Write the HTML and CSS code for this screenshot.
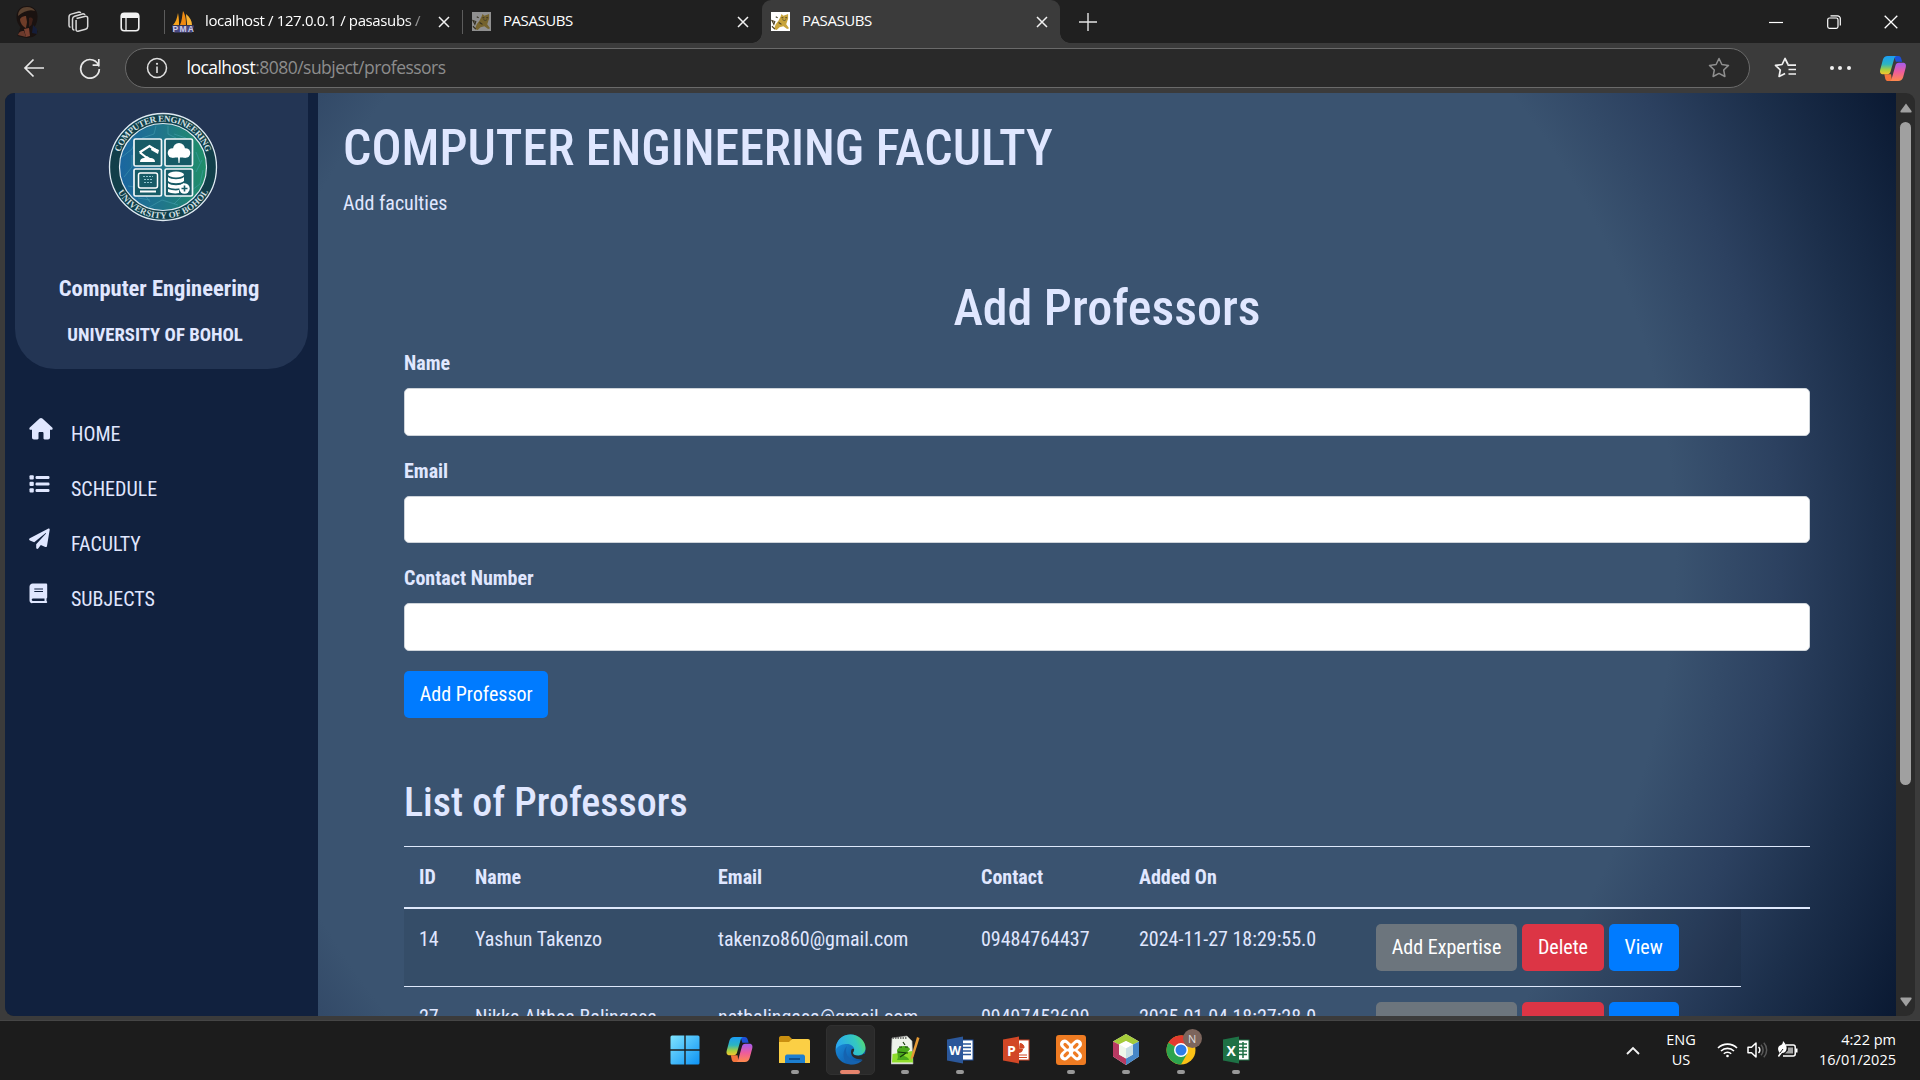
FILE: index.html
```html
<!DOCTYPE html>
<html lang="en">
<head>
<meta charset="utf-8">
<title>PASASUBS</title>
<link rel="stylesheet" href="styles.css">
</head>
<body>
<svg class="defs" width="0" height="0" aria-hidden="true">
  <defs>
    <linearGradient id="cp1" x1="0" y1="0" x2="0" y2="1"><stop offset="0" stop-color="#1b9df5"/><stop offset=".45" stop-color="#2cb5c0"/><stop offset=".75" stop-color="#a8cf3e"/><stop offset="1" stop-color="#f8c52e"/></linearGradient>
    <linearGradient id="cp2" x1="0" y1="0" x2="0" y2="1"><stop offset="0" stop-color="#a45cf0"/><stop offset=".5" stop-color="#ee5c9c"/><stop offset="1" stop-color="#ff8a4c"/></linearGradient>
    <symbol id="copilot" viewBox="0 0 28 28">
      <path d="M15 1h4.500c1.700 0 2.600 1 3 2.500L23.500 7H17z" fill="#1c50d8"/>
      <path d="M13 27H9c-1.700 0-2.600-1-3-2.500L5 20h7z" fill="#f4743c"/>
      <path d="M8.500 1H18c-1.500 0-2.300 1.300-2.700 2.700l-3.700 13C11 19 10 20 8 20H4c-3 0-4-2-3.200-5L3.500 5C4.200 2.500 5.800 1 8.500 1z" fill="url(#cp1)"/>
      <path d="M19.500 27H10c1.500 0 2.300-1.300 2.700-2.700l3.700-13C17 9 18 8 20 8h4c3 0 4 2 3.200 5l-2.700 10c-.7 2.500-2.300 4-5 4z" fill="url(#cp2)"/>
    </symbol>
    <symbol id="x" viewBox="0 0 12 12"><path d="M1 1l10 10M11 1L1 11" fill="none" stroke="#f2f2f2" stroke-width="1.500"/></symbol>
    <symbol id="tomcat" viewBox="0 0 20 20">
      <rect width="20" height="20" fill="#fff"/>
      <path d="M3 18l2-5 3-4 2-4 1-3 2 2 3-1 2-1v5l-1 3-1 3 3 4-2 1-4-3-4 1-3 3z" fill="#c9a53c"/>
      <path d="M1 9l3 1-1 3zM11 6h2M15 6h2M8 11l3 2M1 15l3 3M5 5l2 1" stroke="#4b4022" stroke-width="1.200" fill="none"/>
      <path d="M12 8l2 1 2-1" stroke="#553" stroke-width=".9" fill="none"/>
    </symbol>
  </defs>
</svg>

<header class="titlebar">
  <div class="cell avatar">
    <svg width="26" height="34" viewBox="0 0 26 34"><path d="M2.500 12C2.500 4 8 1 13 1s10.500 3 10.500 10c0 5-1 8-3 11l3 4c0 3-2 5-5 6l-6 1-9-2 3-9c-2.500-3-4-6-4-10z" fill="#1a1210"/><path d="M4 11c0-6 4-9 9-9 4 0 7 2 8 4-5-2-11 0-17 5z" fill="#5a4230"/><path d="M6 14c2-3 5-3 6-3l1 6-1 6c-3-1-6-5-6-9z" fill="#6e3c28"/><path d="M15 13c2-1 3 0 4 1l-1.500 6-2.500 2z" fill="#3e2018"/><path d="M10 24l5-1 1 8-4 1z" fill="#7a4030"/><path d="M4 30c1-4 4-4 6-4l2 6z" fill="#6b3a2c"/><path d="M19 20l4 4v5l-5-1z" fill="#151d38"/></svg>
  </div>
  <div class="cell wide"><svg width="22" height="22" viewBox="0 0 22 22" fill="none" stroke="#d8d8d8" stroke-width="1.500" stroke-linejoin="round"><path d="M9.500 7.500l9-2.200a1.800 1.800 0 012.200 1.700v8.500a3 3 0 01-2.200 2.800l-7.500 2a1.500 1.500 0 01-1.900-1.500V9"/><path d="M5.500 17V8a3 3 0 012.200-2.800l8.500-2.400c1 0 1.500.4 1.800 1.200M2 14.500V6a3 3 0 012.200-2.900L12 1c1 0 1.400.3 1.800 1M2 14.500c0 1 .5 1.700 1.500 1.800M5.500 17c0 1.200.6 2 1.900 2.200"/></svg></div>
  <div class="cell wide2"><svg width="20" height="20" viewBox="0 0 20 20"><rect x="1.200" y="1.200" width="17.600" height="17.600" rx="3" fill="none" stroke="#f2f2f2" stroke-width="1.600"/><path d="M1 6V4a3 3 0 013-3h12a3 3 0 013 3v2z" fill="#f2f2f2"/><path d="M6 6v13" stroke="#f2f2f2" stroke-width="1.300"/></svg></div>
  <div class="tab">
    <svg width="22" height="22" viewBox="0 0 22 22"><path d="M1 14c3-3 4-7 5-12 1 5 1 9 1 12z" fill="#f6a21c"/><path d="M8 14c2-4 2-9 3-14 3 5 3 10 3 14z" fill="#f08a10"/><path d="M15 14c0-4-1-8-1-11 4 3 6 7 6 11z" fill="#f9b233"/><path d="M0 14.500h22l-2 7H2z" fill="#4a4a80"/><text x=".5" y="21" font-size="8.500" font-weight="700" font-family="Liberation Sans" fill="#c9c9e6" textLength="21">PMA</text></svg>
    <span class="tab-title faded">localhost / 127.0.0.1 / pasasubs /</span>
    <svg class="close" width="12" height="12"><use href="#x"/></svg>
  </div>
  <div class="tab second">
    <svg class="dim" width="19" height="19"><use href="#tomcat"/></svg>
    <span class="tab-title">PASASUBS</span>
    <svg class="close" width="12" height="12"><use href="#x"/></svg>
  </div>
  <div class="tab active">
    <svg width="19" height="19"><use href="#tomcat"/></svg>
    <span class="tab-title">PASASUBS</span>
    <svg class="close" width="12" height="12"><use href="#x"/></svg>
  </div>
  <div class="cell plus"><svg width="18" height="18" viewBox="0 0 18 18"><path d="M9 0v18M0 9h18" stroke="#e4e4e4" stroke-width="1.400"/></svg></div>
  <div class="window-controls">
    <div class="cell ctl"><svg width="14" height="14" viewBox="0 0 14 14"><path d="M0 7.500h14" stroke="#fff" stroke-width="1.200"/></svg></div>
    <div class="cell ctl"><svg width="14" height="14" viewBox="0 0 14 14" fill="none" stroke="#fff" stroke-width="1.200"><rect x=".7" y="3" width="10.300" height="10.300" rx="1.800"/><path d="M3.500.8h7a2.800 2.800 0 012.800 2.800v7"/></svg></div>
    <div class="cell ctl"><svg width="14" height="14" viewBox="0 0 14 14"><path d="M.7.7l12.600 12.600M13.300.7L.7 13.300" stroke="#fff" stroke-width="1.300"/></svg></div>
  </div>
</header>

<div class="toolbar">
  <div class="cell back"><svg width="22" height="20" viewBox="0 0 22 20" fill="none" stroke="#e8e8e8" stroke-width="1.700"><path d="M21 10H2M10.500 1.500L2 10l8.500 8.500"/></svg></div>
  <div class="cell reload"><svg width="22" height="22" viewBox="0 0 22 22" fill="none" stroke="#e8e8e8" stroke-width="1.700"><path d="M20 9.500A9.300 9.300 0 1020.300 12M19.800 2v6.200h-6.200"/></svg></div>
  <div class="address">
    <svg class="info" width="22" height="22" viewBox="0 0 22 22"><circle cx="11" cy="11" r="9.500" fill="none" stroke="#e0e0e0" stroke-width="1.500"/><circle cx="11" cy="6.800" r="1.100" fill="#e0e0e0"/><path d="M11 9.500v6.500" stroke="#e0e0e0" stroke-width="1.600"/></svg>
    <span class="url"><b>localhost</b>:8080/subject/professors</span>
    <svg class="star" width="22" height="22" viewBox="0 0 22 22" fill="none" stroke="#8f8f8f" stroke-width="1.500" stroke-linejoin="round"><path d="M11 1.500l2.900 6 6.600.9-4.800 4.600 1.200 6.500-5.900-3.100-5.900 3.100 1.200-6.500L1.500 8.400l6.600-.9z"/></svg>
  </div>
  <div class="cell favs"><svg width="23" height="22" viewBox="0 0 23 22" fill="none" stroke="#f0f0f0" stroke-width="1.700" stroke-linejoin="round"><path d="M13.500 8.200H22M14.500 12.500H22M14.500 17H22"/><path d="M14 7.500L11 1.500 8.100 7.500l-6.600.9 4.800 4.600-1.200 6.500 6-3.100"/></svg></div>
  <div class="cell dots"><i></i><i></i><i></i></div>
  <div class="cell pilot"><svg width="28" height="27"><use href="#copilot"/></svg></div>
</div>

<div class="frame">
  <div class="page">
    <aside class="sidebar">
      <div class="brand">
        <svg class="seal" width="110" height="110" viewBox="0 0 110 110">
          <defs>
            <linearGradient id="seal" x1="0" y1="0" x2="1" y2="0"><stop offset="0" stop-color="#1a66a0"/><stop offset=".5" stop-color="#20768a"/><stop offset="1" stop-color="#1f8f68"/></linearGradient>
            <path id="arcTop" d="M9.500 55a45.500 45.500 0 0191 0"/>
            <path id="arcBot" d="M3.500 55a51.500 51.500 0 00103 0"/>
          </defs>
          <circle cx="55" cy="55" r="53.500" fill="#123f4a" stroke="#dfeaf2" stroke-width="1.300"/>
          <circle cx="55" cy="55" r="43.500" fill="url(#seal)" stroke="#dfeaf2" stroke-width="1.200"/>
          <g fill="none" stroke="#4aa3b4" stroke-width=".7" opacity=".7"><path d="M14 45l10-8 4-10M16 65l8-10v-12M20 74l12 2 10 14M40 96l14-8 16 5M84 78l8-6 3-14M88 60l6-12M84 36l-6-10-12-4M48 14l-2 8-12 4M60 14v8l8 4M30 86l12 2M66 92l10-10M88 40l4 10"/></g>
          <g fill="#175b66" stroke="#f2f7fa" stroke-width="1.700"><rect x="26" y="27" width="27.500" height="27" rx="1.500"/><rect x="57" y="27" width="27.500" height="27" rx="1.500"/><rect x="26" y="57" width="27.500" height="27" rx="1.500"/><rect x="57" y="57" width="27.500" height="27" rx="1.500"/></g>
          <path d="M31.500 40.500l10-6.500 8.500 5.500M32 40.500l6.500 5" fill="none" stroke="#fff" stroke-width="2.200"/>
          <g fill="#fff"><path d="M32 50c0-3 2-4 4-4l3-2 3 2c3 0 5 1 5 4z"/><path d="M44 35l7 3-1 4-7-4z"/><circle cx="64.500" cy="41" r="4.800"/><circle cx="71" cy="37" r="6"/><circle cx="77.500" cy="41" r="4.800"/><path d="M64 41h14v4.500H64zM70 45h2l-.5 6h-1z"/><ellipse cx="68" cy="62.500" rx="8" ry="3"/><path d="M60 65c3 3 13 3 16 0v4c-3 3-13 3-16 0zM60 71c3 3 13 3 16 0v2l-3 3c-4 1-10 1-13-1zM60 77c3 1 8 2 11 1v3c-4 1-9 0-11-1z"/><circle cx="76.500" cy="76.500" r="5.200"/></g>
          <path d="M76.500 73.500v6M73.500 76.500h6" stroke="#175b66" stroke-width="1.600"/>
          <rect x="30.500" y="61" width="19" height="15" rx="2" fill="none" stroke="#fff" stroke-width="1.500"/><path d="M35 64.500h10M36 67.500h9M36 70.500h8" stroke="#8fc3cc" stroke-width="1" stroke-dasharray="2 1"/><path d="M32 79.500h16" stroke="#fff" stroke-width="2"/>
          <g font-family="Liberation Serif, serif" font-size="9" fill="#d2e0e4"><text><textPath href="#arcTop" startOffset="15" textLength="113">COMPUTER ENGINEERING</textPath></text><text><textPath href="#arcBot" startOffset="26" textLength="110">UNIVERSITY OF BOHOL</textPath></text></g>
        </svg>
        <div class="dept">Computer Engineering</div>
        <div class="univ">UNIVERSITY OF BOHOL</div>
      </div>
      <nav class="menu">
        <a><svg width="24" height="22" viewBox="0 0 24 22"><path d="M12 0c.5 0 1 .2 1.400.6l9.800 9c.9.900.4 2.200-.8 2.200H21v7.700c0 1.200-.8 2-2 2h-3.300c-.9 0-1.200-.5-1.200-1.200v-5c0-.8-.5-1.200-1.200-1.200h-2.600c-.7 0-1.200.4-1.200 1.200v5c0 .7-.3 1.200-1.200 1.200H5c-1.200 0-2-.8-2-2v-7.700H1.600c-1.200 0-1.700-1.300-.8-2.200l9.800-9C11 .2 11.500 0 12 0z"/></svg><span>HOME</span></a>
        <a><svg width="24" height="22" viewBox="0 0 24 22"><rect x=".5" y="2.300" width="4.300" height="4.300" rx="1"/><rect x=".5" y="8.800" width="4.300" height="4.300" rx="1"/><rect x=".5" y="15.300" width="4.300" height="4.300" rx="1"/><rect x="6.500" y="3.100" width="14" height="2.800" rx="1.200"/><rect x="6.500" y="9.600" width="14" height="2.800" rx="1.200"/><rect x="6.500" y="16.100" width="14" height="2.800" rx="1.200"/></svg><span>SCHEDULE</span></a>
        <a><svg width="24" height="22" viewBox="0 0 24 22"><path d="M19 .8c.9-.6 1.800 0 1.700 1L18 18c-.1.900-.9 1.300-1.700.9l-4.500-1.900-2.600 3.500c-.7.900-2 .5-2-.7v-3.600L17 5.400c.2-.2-.1-.5-.3-.3L5.200 14.300.9 12.500c-1-.4-1.100-1.700-.1-2.300z"/></svg><span>FACULTY</span></a>
        <a><svg width="24" height="22" viewBox="0 0 24 22"><path fill-rule="evenodd" d="M3.800.500H17c.7 0 1.200.5 1.200 1.200v12.600c0 .5-.2.900-.7 1.100v2.500c.5.200.7.500.7 1 0 .7-.5 1.200-1.200 1.200H3.800C1.800 20.600.5 19.200.5 17.300V3.800C.5 1.900 1.800.5 3.800.5zM5.300 5.400v1h8.700v-1zM5.300 8V9h8.700V8zM3.800 15.500c-1.500 0-1.500 2.500 0 2.500h11.700v-2.500z"/></svg><span>SUBJECTS</span></a>
      </nav>
    </aside>
    <main class="main">
      <h1>COMPUTER ENGINEERING FACULTY</h1>
      <p class="lead">Add faculties</p>
      <section class="content">
        <h1 class="centered">Add Professors</h1>
        <div class="group"><label>Name</label><div class="input"></div></div>
        <div class="group"><label>Email</label><div class="input"></div></div>
        <div class="group"><label>Contact Number</label><div class="input"></div></div>
        <span class="btn primary">Add Professor</span>
        <h2>List of Professors</h2>
        <table>
          <colgroup><col class="c-id"><col class="c-name"><col class="c-email"><col class="c-contact"><col class="c-added"><col class="c-actions"><col class="c-rest"></colgroup>
          <thead><tr><th>ID</th><th>Name</th><th>Email</th><th>Contact</th><th>Added On</th><th></th><th></th></tr></thead>
          <tbody>
            <tr class="striped"><td>14</td><td>Yashun Takenzo</td><td>takenzo860@gmail.com</td><td>09484764437</td><td>2024-11-27 18:29:55.0</td><td><div class="actions"><span class="btn gray">Add Expertise</span><span class="btn red">Delete</span><span class="btn primary">View</span></div></td></tr>
            <tr class="next"><td>27</td><td>Nikka Althea Balingasa</td><td>natbalingasa@gmail.com</td><td>09497452699</td><td>2025-01-04 18:27:28.0</td><td><div class="actions"><span class="btn gray">Add Expertise</span><span class="btn red">Delete</span><span class="btn primary">View</span></div></td></tr>
          </tbody>
        </table>
      </section>
    </main>
    <div class="scrollbar">
      <svg width="12" height="10" viewBox="0 0 12 10"><path d="M6 .5L11.500 8c.3.900 0 1.500-.8 1.500H1.300C.5 9.500.2 8.900.5 8z" fill="#a0a0a0"/></svg>
      <div class="thumb"></div>
      <svg class="down" width="12" height="10" viewBox="0 0 12 10"><path d="M6 9.500L11.500 2c.3-.900 0-1.500-.8-1.500H1.300C.5.500.2 1.100.5 2z" fill="#a0a0a0"/></svg>
    </div>
  </div>
</div>

<footer class="taskbar">
  <div class="apps">
    <div class="app"><svg width="30" height="30" viewBox="0 0 30 30"><defs><linearGradient id="win" x1="0" y1="0" x2="1" y2="1"><stop offset="0" stop-color="#7fe4ff"/><stop offset="1" stop-color="#0d92f4"/></linearGradient></defs><path d="M2 .5h12.300v13.800H.5V2A1.500 1.500 0 012 .5zM15.700.5H28A1.500 1.500 0 0129.500 2v12.300H15.700zM.5 15.700h13.800v13.800H2A1.500 1.500 0 01.5 28zM15.700 15.700h13.800V28a1.500 1.500 0 01-1.500 1.500H15.700z" fill="url(#win)"/></svg></div>
    <div class="app"><svg width="29" height="27"><use href="#copilot"/></svg></div>
    <div class="app run"><svg width="31" height="28" viewBox="0 0 31 28"><path d="M0 2c0-1 .7-2 2-2h8l3 3-3 5H0z" fill="#c98f10"/><path d="M0 6h10l3-3h16c1.200 0 2 .8 2 2v22H0z" fill="#fbcf45"/><path d="M6 27v-6c0-1.500.8-2.500 2-2.500h16c1.200 0 2 1 2 2.500v6z" fill="#1d7fd0"/><path d="M10 23h11" stroke="#0d508f" stroke-width="2"/></svg></div>
    <div class="app run current"><svg width="31" height="31" viewBox="0 0 31 31"><defs><linearGradient id="e1" x1="0" y1=".3" x2="1" y2="0"><stop offset="0" stop-color="#2aa8ef"/><stop offset=".6" stop-color="#34c8c0"/><stop offset="1" stop-color="#62e052"/></linearGradient><linearGradient id="e2" x1="0" y1="0" x2="1" y2="1"><stop offset="0" stop-color="#1c96e4"/><stop offset="1" stop-color="#0b4a9a"/></linearGradient></defs><circle cx="15.500" cy="15.500" r="15" fill="url(#e2)"/><path d="M1 12C3 4 9 .5 15.500.5 24 .5 30.500 7 30.500 14c0 5-4 7.500-8 7.500-3 0-4.500-1-4.500-2.500 0-1 1.200-1.500 1.200-3.500 0-3-3.200-5.500-7.200-5.500-4 0-8 1-11 5z" fill="url(#e1)"/><path d="M12 12c-3 6 1 14 9 15 4 .5 7-1 8-3-3 5-8 6.500-12 6.500C8 30 6 18 12 12z" fill="#1563b0"/><path d="M18 19c0 3 8 4 11 .5l3 2-2 4c-1 1-2 1-3-.5-6 1-11-2-11-7 0-3 1.500-4 3-3 .3 2-1 3-1 4z" fill="#2a2a2a"/></svg></div>
    <div class="app run"><svg width="29" height="30" viewBox="0 0 29 30"><path d="M1 3l15-2 5 5 1 23H0z" fill="#eef3ea" stroke="#aaa" stroke-width=".6"/><path d="M1.500 3h14" stroke="#555" stroke-width="1.500" stroke-dasharray="1.500 1"/><path d="M1.500 19l20-3 .5 11.500H1z" fill="#8fdd2c"/><path d="M6 15c2-5 11-5 13-1-1 3-5 3-6 7 3 1 5 2 5 4H6c2-3 0-6 0-10z" fill="#4caa1c"/><path d="M8 12h3M14 12h3M7 17l10 1M9 22l6-4M12 7l2 3" stroke="#173c0c" stroke-width="1.200"/><path d="M20 22L26 2l2.500 1-6 19-3 3z" fill="#e59a35"/></svg></div>
    <div class="app run"><svg width="28" height="28" viewBox="0 0 28 28"><rect x="14" y="4" width="13" height="20" fill="#fff" stroke="#1f4e9c"/><path d="M17 8h8M17 11.500h8M17 15h8M17 18.500h8" stroke="#2b579a" stroke-width="1.500"/><path d="M1 3.500L17 .5v27L1 24.500z" fill="#2b579a"/><text x="3" y="19" font-family="Open Sans, sans-serif" font-weight="700" font-size="13" fill="#fff" textLength="12" lengthAdjust="spacingAndGlyphs">W</text></svg></div>
    <div class="app"><svg width="28" height="28" viewBox="0 0 28 28"><rect x="14" y="4" width="13" height="20" fill="#fff" stroke="#d24726"/><path d="M17 9.500a3.500 3.500 0 103.500 3.500H17zM18 7.500V12h4a4 4 0 00-4-4.500zM17 19h8M17 21.500h8" fill="#d24726" stroke="#d24726" stroke-width="1"/><path d="M1 3.500L17 .5v27L1 24.500z" fill="#d24726"/><text x="5" y="19.500" font-family="Open Sans, sans-serif" font-weight="700" font-size="14" fill="#fff">P</text></svg></div>
    <div class="app run"><svg width="30" height="30" viewBox="0 0 30 30"><rect width="30" height="30" rx="3" fill="#ee7b22"/><path d="M8.500 9l13 12M21.500 9l-13 12" stroke="#fff" stroke-width="9" stroke-linecap="round" stroke-linejoin="round"/><path d="M9 9.500l2.500 2.500M21 9.500L18.500 12M9 20.500l2.500-2.500M21 20.500L18.500 18" stroke="#ee7b22" stroke-width="3.200" stroke-linecap="round"/></svg></div>
    <div class="app run"><svg width="28" height="31" viewBox="0 0 28 31"><path d="M14 0l13 7.500v15L14 31 1 22.500v-15z" fill="#e9eef2"/><path d="M14 0l13 7.500-6 3L14 7 7 10.500l-6-3z" fill="#a5cc3a"/><path d="M1 7.500l6 3v10l7 4V31L1 22.500z" fill="#b73a62"/><path d="M27 7.500l-6 3v10l-7 4V31l13-8.500z" fill="#4687c8"/><path d="M14 7l7 3.500-7 4-7-4z" fill="#fff"/><path d="M21 10.500v10l-7 4v-10z" fill="#c8dfe4"/><path d="M7 10.500v10l7 4v-10z" fill="#eef7ea"/></svg></div>
    <div class="app run chrome"><svg width="30" height="30" viewBox="0 0 30 30"><circle cx="15" cy="15" r="14.500" fill="#fbc116"/><path d="M15 15L2.400 7.800A14.500 14.500 0 0127.600 7.800z" fill="#e33b2e"/><path d="M15 .5A14.500 14.500 0 0127.600 7.800H15z" fill="#e33b2e"/><path d="M2.400 7.800A14.500 14.500 0 0015 29.500l6.200-10.900L15 15z" fill="#2da44e"/><circle cx="15" cy="15" r="7" fill="#fff"/><circle cx="15" cy="15" r="5.500" fill="#2f7de8"/></svg><span class="badge">N</span></div>
    <div class="app run"><svg width="28" height="28" viewBox="0 0 28 28"><rect x="14" y="4" width="13" height="20" fill="#fff" stroke="#1e7145"/><path d="M17 8h8M17 11.500h8M17 15h8M17 18.500h8M21 6v16" stroke="#1e7145" stroke-width="1.500"/><path d="M1 3.500L17 .5v27L1 24.500z" fill="#1e7145"/><text x="4.500" y="19.500" font-family="Open Sans, sans-serif" font-weight="700" font-size="14" fill="#fff">X</text></svg></div>
  </div>
  <div class="tray">
    <svg width="14" height="9" viewBox="0 0 14 9"><path d="M1 8l6-6 6 6" fill="none" stroke="#f2f2f2" stroke-width="1.900"/></svg>
    <div class="lang"><span>ENG</span><span>US</span></div>
    <div class="status">
      <svg width="21" height="16" viewBox="0 0 21 16" fill="none" stroke="#fff" stroke-width="1.600"><path d="M1 6a13.500 13.500 0 0119 0M4 9a9.300 9.300 0 0113 0M6.800 11.800a5.300 5.300 0 017.400 0"/><circle cx="10.500" cy="14" r="1.300" fill="#fff" stroke="none"/></svg>
      <svg width="21" height="18" viewBox="0 0 21 18" fill="none" stroke="#fff" stroke-width="1.500" stroke-linejoin="round"><path d="M1 6.200h3.500L9 2v14l-4.500-4.200H1z"/><path d="M11.500 6a4 4 0 010 6"/><path d="M14 3.800a7.500 7.500 0 010 10.400M16.800 1.800a10.500 10.500 0 010 14.400" stroke="#5a5a5a"/></svg>
      <svg width="21" height="18" viewBox="0 0 21 18"><path d="M9 4h7.200a2 2 0 012 2v7a2 2 0 01-2 2H6" fill="none" stroke="#fff" stroke-width="1.500"/><path d="M19 7.500h1.500v4H19z" fill="#fff"/><path d="M6 0c2.500 2.500 4 5 3.500 8-.4 2.500-2 4-4.500 4L2 16 .8 15l2-3C0 9 1 5 3 4.500 4.500 4 6 3 6 0z" fill="#fff"/><path d="M11 6.500h5v6H8l3-3z" fill="#fff" opacity=".6"/><path d="M3 12l3-4" stroke="#1c1c1c"/></svg>
    </div>
    <div class="clock"><span>4:22 pm</span><span>16/01/2025</span></div>
  </div>
</footer>
</body>
</html>
```
FILE: styles.css
```css
* { box-sizing: border-box; }
html, body { margin: 0; width: 1920px; height: 1080px; overflow: hidden; }
body {
  display: flex;
  flex-direction: column;
  background: #3b3b3b;
  color: #fff;
  font-family: "Open Sans", "Noto Sans", sans-serif;
}
svg { display: block; flex: none; }
.defs { position: absolute; }
.cell { display: flex; align-items: center; justify-content: center; flex: none; }

/* Browser tab strip */
.titlebar { display: flex; height: 43px; background: #202020; flex: none; }
.avatar { width: 54px; }
.wide { width: 47px; }
.wide2 { width: 58px; margin-right: 5px; }
.tab {
  position: relative;
  display: flex;
  align-items: center;
  width: 298px;
  padding: 0 12px 0 8px;
  font-size: 15px;
  letter-spacing: -.45px;
}
.tab::before { content: ""; position: absolute; left: 0; top: 10px; width: 1px; height: 24px; background: #5c5c5c; }
.tab.second { width: 300px; padding: 0 13px 0 10px; }
.tab.active { background: #3b3b3b; border-radius: 9px 9px 0 0; padding-left: 9px; }
.tab.active::before, .tab.active::after {
  content: ""; position: absolute; top: auto; bottom: 0; width: 10px; height: 10px;
}
.tab.active::before { left: -10px; background: radial-gradient(circle at 0 0, #202020 9.5px, #3b3b3b 10px); }
.tab.active::after { right: -10px; background: radial-gradient(circle at 100% 0, #202020 9.5px, #3b3b3b 10px); }
.tab-title { margin: 0 0 3px 12px; line-height: 24px; white-space: nowrap; }
.tab-title.faded {
  width: 226px;
  margin-left: 11px;
  letter-spacing: -.37px;
  -webkit-mask-image: linear-gradient(90deg, #000 200px, transparent 226px);
  mask-image: linear-gradient(90deg, #000 200px, transparent 226px);
}
.close { margin-left: auto; }
.dim { opacity: .5; }
.plus { width: 56px; }
.window-controls { display: flex; margin-left: auto; }
.ctl { width: 57.5px; }

/* Address row */
.toolbar { display: flex; align-items: center; height: 50px; flex: none; }
.back { width: 68px; }
.reload { width: 44px; margin-right: 13px; }
.address {
  display: flex;
  align-items: center;
  flex: none;
  width: 1625px;
  height: 40px;
  padding: 0 19px 0 20px;
  border: 1px solid #6a6a6a;
  border-radius: 20px;
  background: #292929;
}
.url { margin: 0 0 2px 18.5px; font-size: 17.5px; line-height: 24px; letter-spacing: -.52px; color: #8d8d8d; }
.url b { font-weight: 400; color: #fff; }
.star { margin-left: auto; }
.favs { width: 70px; }
.dots { width: 40px; gap: 4.5px; }
.dots i { width: 4px; height: 4px; border-radius: 50%; background: #f0f0f0; }
.pilot { width: 66px; margin-right: -6px; }

/* Page viewport */
.frame { height: 928px; padding: 0 5px; flex: none; border-bottom: 1px solid #454545; }
.page {
  display: flex;
  height: 923px;
  overflow: hidden;
  border-radius: 9px;
  background: #2b2b2b;
  font-family: "Roboto Condensed", Roboto, sans-serif;
  font-size: 20px;
  line-height: 30px;
  color: #e0e7ff;
}
.sidebar { width: 313px; background: #11213e; flex: none; }
.brand {
  display: flex;
  flex-direction: column;
  align-items: center;
  width: 293px;
  height: 275.5px;
  margin-left: 10px;
  padding-top: 19px;
  border-radius: 0 0 40px 40px;
  background: #233554;
  font-weight: 700;
}
.seal { margin-left: 2px; }
.dept { margin: 51px 5px 0 0; font-size: 22.5px; line-height: 30px; }
.univ { margin: 17px 13px 0 0; font-size: 18.75px; }
.menu { display: flex; flex-direction: column; padding: 38px 0 0 24px; }
.menu a { display: flex; height: 55px; gap: 18px; align-items: center; }
.menu svg { fill: #e0e7ff; margin-bottom: 11px; }

.main {
  width: 1578px;
  padding: 25px 25px 0;
  flex: none;
  background: radial-gradient(circle 1052px at 632px 462px, #3a5370 69%, #2c4160 79%, #1c2f4b 88%, #0a1932 100%);
}
h1, h2 { margin: 0; font-weight: 500; line-height: 1.2; }
h1 { font-size: 50px; }
h2 { font-size: 40px; margin: 61.5px 0 18.5px; }
.lead { margin: 10px 0 60px; }
.content { width: 1406px; margin-left: 61px; }
.centered { text-align: center; margin-bottom: 10px; }
.group { margin-bottom: 20px; }
.group label { display: block; height: 40px; font-weight: 700; }
.input { height: 47.5px; border: 1px solid #ced4da; border-radius: 5px; background: #fff; }
.btn {
  display: block;
  width: max-content;
  height: 47px;
  padding: 0 15.8px;
  border-radius: 5px;
  line-height: 47px;
  color: #fff;
}
.primary { background: #007bff; }
.gray { background: #6c757d; }
.red { background: #dc3545; }
table { table-layout: fixed; width: 1406px; border-collapse: separate; border-spacing: 0; }
.c-id { width: 56px; }
.c-name { width: 243px; }
.c-email { width: 263px; }
.c-contact { width: 158px; }
.c-added { width: 237px; }
.c-actions { width: 380px; }
.c-rest { width: 69px; }
th { padding: 15px; text-align: left; font-weight: 700; border-top: 1px solid #dee8fb; border-bottom: 2px solid #dee8fb; }
td { padding: 15px; vertical-align: top; white-space: nowrap; }
.striped td { background: rgba(0, 0, 0, .07); }
.next td { border-top: 1px solid #dee8fb; }
.actions { display: flex; gap: 5px; }

.scrollbar { display: flex; flex-direction: column; align-items: center; width: 19px; padding: 10px 0 9px; }
.thumb { width: 11px; height: 663px; margin-top: 9px; border-radius: 6px; background: #a0a0a0; }
.down { margin-top: auto; }

/* Taskbar */
.taskbar { display: flex; height: 59px; padding-left: 657px; background: #1c1c1c; flex: none; }
.apps { display: flex; }
.app { position: relative; display: flex; align-items: center; justify-content: center; width: 55.18px; height: 57px; }
.run::after {
  content: ""; position: absolute; left: 50%; bottom: 4px; width: 8px; height: 4px; margin-left: -4px;
  border-radius: 2px; background: #989898;
}
.current::before { content: ""; position: absolute; inset: 4px 3px 3px; border-radius: 5px; background: #2a2a2a; border: 1px solid #303030; }
.current svg { position: relative; }
.current::after { width: 20px; margin-left: -10px; background: #e5836c; }
.badge {
  position: absolute; left: 29px; top: 8px; width: 19px; height: 19px; border-radius: 50%;
  background: #7d655c; color: #ddd; font-size: 11px; line-height: 19px; text-align: center;
}
.tray { display: flex; align-items: center; margin-left: auto; padding: 0 24px 1px 0; font-size: 14.5px; line-height: 20px; }
.lang { display: flex; flex-direction: column; align-items: center; width: 30px; margin-left: 26px; }
.status { display: flex; gap: 9px; margin-left: 21px; align-items: center; }
.clock { display: flex; flex-direction: column; align-items: flex-end; width: 78px; margin-left: 20px; white-space: nowrap; }
```
